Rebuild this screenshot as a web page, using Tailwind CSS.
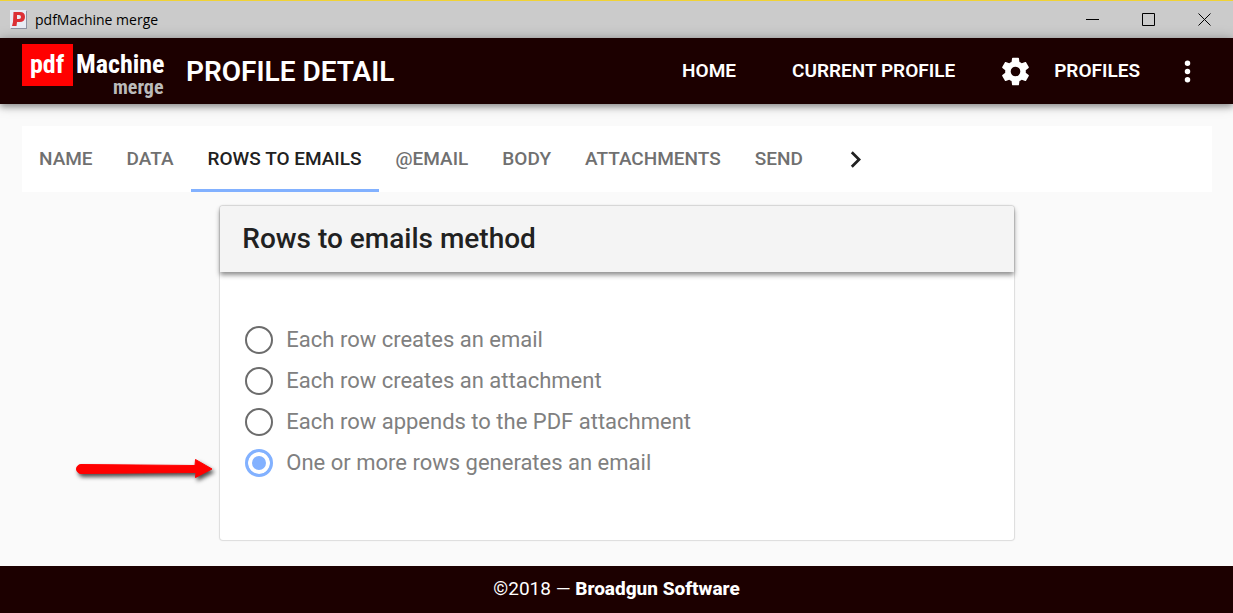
<!DOCTYPE html>
<html lang="en">
<head>
    <meta charset="UTF-8">
    <meta name="viewport" content="width=device-width, initial-scale=1.0">
    <title>pdfMachine merge</title>
    <script src="https://cdn.jsdelivr.net/npm/@tailwindcss/browser@4"></script>
</head>
<body class="flex min-h-screen flex-col bg-[#fafafa] font-['Roboto',sans-serif]">
    <!-- Window title bar -->
    <div class="flex h-[38px] items-center border-t border-[#f0d235] bg-[#cbcbcb] pr-px pl-[10px] text-black">
        <svg class="h-5 w-[17px]" viewBox="0 0 17 20">
            <rect x="1" y="1" width="16" height="18" fill="#8f93a3"/>
            <rect x="0" y="0" width="16" height="18" fill="#e9ecf5"/>
            <path fill="#dc2f36" fill-rule="evenodd" d="M3.500 2H10Q15 2 15 7Q15 12 9.500 12H7L6.500 16H2L3 12ZM7 5V9H9Q11 9 11 7Q11 5 9 5Z"/>
        </svg>
        <span class="ml-2 font-['Open_Sans',sans-serif] text-[14px]">pdfMachine merge</span>
        <div class="ml-auto flex h-full">
            <button aria-label="Minimize" class="flex w-14 items-center justify-center">
                <svg class="h-[13px] w-[13px]" viewBox="0 0 13 13" stroke="currentColor"><path d="M0 6.500H13"/></svg>
            </button>
            <button aria-label="Maximize" class="flex w-14 items-center justify-center">
                <svg class="h-[13px] w-[13px]" viewBox="0 0 13 13" fill="none" stroke="currentColor"><path d="M.5.500H12.500V12.500H.5Z"/></svg>
            </button>
            <button aria-label="Close" class="flex w-14 items-center justify-center">
                <svg class="h-[13px] w-[13px]" viewBox="0 0 13 13" stroke="currentColor"><path d="M.5.500L12.500 12.500M12.500.500L.5 12.500"/></svg>
            </button>
        </div>
    </div>

    <!-- App toolbar -->
    <header class="z-10 flex h-[66px] items-center bg-[#1c0000] pr-[29px] pl-[22px] text-white shadow-[0_3px_6px_rgba(0,0,0,0.3),0_1px_12px_rgba(0,0,0,0.25)]">
        <svg class="h-[56px] w-[144px]" viewBox="0 0 144 56" role="img" aria-label="pdfMachine merge" font-family="'Liberation Sans Narrow','Roboto Condensed','DejaVu Sans Condensed',sans-serif" font-weight="700">
            <rect width="51" height="42" y="1" fill="#f00"/>
            <text x="8" y="30" font-size="26" fill="#fff">pdf</text>
            <text x="54" y="30" font-size="26" fill="#fff">Machine</text>
            <text x="91" y="51" font-size="20" fill="#bbb">merge</text>
        </svg>
        <h1 class="ml-5 pt-0.5 text-[28px] font-semibold">PROFILE DETAIL</h1>
        <nav class="ml-auto flex items-center text-[19px] font-semibold">
            <a href="#">HOME</a>
            <a href="#" class="ml-[56px]">CURRENT PROFILE</a>
            <a href="#" class="ml-[44px] flex items-center gap-[22px]">
                <svg class="h-[33px] w-[33px]" viewBox="0 0 24 24" fill="currentColor"><path d="M12 15.500A3.500 3.500 0 0 1 8.500 12 3.500 3.500 0 0 1 12 8.500a3.500 3.500 0 0 1 3.500 3.500 3.500 3.500 0 0 1-3.500 3.500m7.430-2.530c.040-.320.070-.640.070-.970s-.030-.660-.070-1l2.110-1.630c.190-.150.240-.420.120-.640l-2-3.460c-.120-.220-.390-.310-.610-.220l-2.490 1c-.520-.390-1.060-.730-1.690-.980l-.370-2.650A.506.506 0 0 0 14 2h-4c-.250 0-.460.180-.500.420l-.370 2.650c-.630.250-1.170.590-1.690.980l-2.490-1c-.220-.090-.490 0-.610.220l-2 3.460c-.130.220-.070.490.120.640L4.570 11c-.040.340-.070.670-.070 1s.030.650.070.970l-2.110 1.660c-.190.150-.250.420-.120.640l2 3.460c.120.220.390.300.610.220l2.490-1.010c.520.400 1.060.740 1.690.990l.370 2.650c.040.240.250.420.500.420h4c.250 0 .460-.180.500-.420l.370-2.650c.630-.260 1.170-.590 1.690-.990l2.490 1.010c.220.080.490 0 .610-.220l2-3.460c.120-.220.070-.490-.120-.640z"/></svg>
                PROFILES
            </a>
            <button aria-label="More" class="ml-[31px]">
                <svg class="h-[33px] w-[33px]" viewBox="0 0 24 24" fill="currentColor"><path d="M12 16a2 2 0 1 1 0 4 2 2 0 0 1 0-4m0-6a2 2 0 1 1 0 4 2 2 0 0 1 0-4m0-6a2 2 0 1 1 0 4 2 2 0 0 1 0-4"/></svg>
            </button>
        </nav>
    </header>

    <main class="relative flex-1 pt-[22px] pr-[21px] pb-[25px] pl-[22px]">
        <div class="flex h-[66px] bg-white text-[19px] font-medium text-[#707070]">
            <button class="border-y-3 border-transparent px-[17px]">NAME</button>
            <button class="border-y-3 border-transparent px-[17px]">DATA</button>
            <button class="border-y-3 border-t-transparent border-b-[#82b1ff] px-[17px] text-[#212121]">ROWS TO EMAILS</button>
            <button class="border-y-3 border-transparent px-[17px]">@EMAIL</button>
            <button class="border-y-3 border-transparent px-[17px]">BODY</button>
            <button class="border-y-3 border-transparent px-[17px]">ATTACHMENTS</button>
            <button class="border-y-3 border-transparent px-[17px]">SEND</button>
            <button aria-label="Next tabs" class="ml-[19px] text-[#212121]">
                <svg class="h-[33px] w-[33px]" viewBox="0 0 24 24" fill="currentColor"><path d="M8.590 16.590L13.170 12 8.590 7.410 10 6l6 6-6 6-1.410-1.410z"/></svg>
            </button>
        </div>

        <section class="mx-auto mt-[14px] w-2/3 rounded-[3px] bg-white pb-[61px] shadow-[0_0_1px_1px_rgba(0,0,0,0.12)]">
            <div class="flex h-[66px] items-center rounded-t-[3px] bg-[#f4f4f4] px-[22px] shadow-[0_3px_5px_rgba(0,0,0,0.45)]">
                <h2 class="text-[28px] font-medium text-[#212121]">Rows to emails method</h2>
            </div>
            <form class="flex flex-col gap-2 px-[25px] pt-[51px] text-[22px] text-[#808080]">
                <label class="flex items-center gap-[13px] leading-[33px]">
                    <input type="radio" name="method" class="h-[28px] w-[28px] appearance-none rounded-full border-2 border-[#6c6c6c]">
                    Each row creates an email
                </label>
                <label class="flex items-center gap-[13px] leading-[33px]">
                    <input type="radio" name="method" class="h-[28px] w-[28px] appearance-none rounded-full border-2 border-[#6c6c6c]">
                    Each row creates an attachment
                </label>
                <label class="flex items-center gap-[13px] leading-[33px]">
                    <input type="radio" name="method" class="h-[28px] w-[28px] appearance-none rounded-full border-2 border-[#6c6c6c]">
                    Each row appends to the PDF attachment
                </label>
                <label class="flex items-center gap-[13px] leading-[33px]">
                    <input type="radio" name="method" checked class="h-[28px] w-[28px] appearance-none rounded-full border-3 border-[#82b1ff] bg-[#82b1ff] shadow-[inset_0_0_0_4px_#fff]">
                    One or more rows generates an email
                </label>
            </form>
        </section>

        <!-- Pointer to the selected option -->
        <svg class="absolute top-[350px] left-[74px] h-[32px] w-[146px] drop-shadow-[2px_3px_2px_rgba(0,0,0,0.7)]" viewBox="0 0 146 32" fill="#f00" stroke="#f00" stroke-linejoin="round" aria-hidden="true">
            <path d="M7 10.500L121 11.500L121.500 5.500L138 15L121.500 23.500L122 18.500L7 19.500A4.500 4.500 0 0 1 7 10.500Z"/>
        </svg>
    </main>

    <footer class="flex h-[47px] items-center justify-center bg-[#1c0000] text-[19px] text-white">
        <div>©2018 — <strong class="font-extrabold">Broadgun Software</strong></div>
    </footer>
</body>
</html>
